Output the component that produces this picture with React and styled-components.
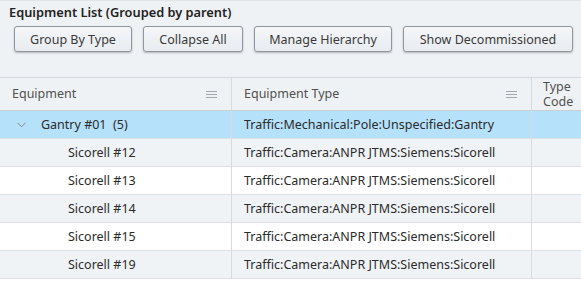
import React from 'react'
import styled, { createGlobalStyle } from 'styled-components'

const Global = createGlobalStyle`
  body {
    margin: 0;
    background: #ffffff;
    font-family: "Noto Sans", "Open Sans", sans-serif;
    color: #2b2b2b;
  }
`

const Page = styled.div`
  width: 581px;
  height: 288px;
  overflow: hidden;
  background: #ffffff;
`

const Toolbar = styled.div`
  height: 78px;
  box-sizing: border-box;
  background: #eff2f5;
  border-top: 1px solid #e1e5ea;
  border-bottom: 1px solid #d3d8de;
  padding: 2px 0 0 9px;
`

const Title = styled.div`
  font-size: 12.8px;
  font-weight: 600;
  line-height: 18px;
  color: #222;
`

const Buttons = styled.div`
  display: flex;
  gap: 11px;
  margin-top: 5px;
  padding-left: 5px;
`

const Button = styled.button`
  height: 26px;
  width: ${p => p.$w}px;
  box-sizing: border-box;
  border: 1px solid #8f969e;
  border-radius: 3px;
  background: linear-gradient(#f4f6f8, #e8ecf0);
  box-shadow: 0 1px 2px rgba(0, 0, 0, 0.25);
  font-family: inherit;
  font-size: 12.5px;
  color: #3a3a3a;
  padding: 0;
`

const Grid = styled.div`
  display: grid;
  grid-template-columns: 232px 300px 1fr;
`

const Row = styled.div`
  display: contents;
  & > div {
    background: ${p => (p.$selected ? '#b5e1fb' : p.$alt ? '#f0f3f6' : '#ffffff')};
    height: 28px;
    border-bottom: 1px solid #dde1e6;
  }
`

const HeadCell = styled.div`
  height: 33px;
  box-sizing: border-box;
  background: #eff2f5;
  border-bottom: 1px solid #c9ced5;
  border-right: ${p => (p.$last ? 'none' : '1px solid #d6dbe1')};
  display: flex;
  align-items: center;
  justify-content: space-between;
  padding: 0 14px 0 ${p => p.$pad || 12}px;
  font-size: 12.5px;
  color: #505050;
  line-height: 15.5px;
`

const Cell = styled.div`
  box-sizing: border-box;
  border-right: ${p => (p.$last ? 'none' : '1px solid #d6dbe1')};
  display: flex;
  align-items: center;
  padding-left: ${p => p.$indent || 12}px;
  font-size: 12.5px;
  color: #2b2b2b;
  white-space: nowrap;
  gap: 15px;
`

const Menu = () => (
  <svg width="11" height="9" viewBox="0 0 11 9">
    <g stroke="#a3a8ae" strokeWidth="1">
      <line x1="0" y1="1.5" x2="11" y2="1.5" />
      <line x1="0" y1="4.5" x2="11" y2="4.5" />
      <line x1="0" y1="7.5" x2="11" y2="7.5" />
    </g>
  </svg>
)

const Chevron = () => (
  <svg width="9" height="6" viewBox="0 0 9 6">
    <path d="M0.5 0.8 L4.5 4.8 L8.5 0.8" fill="none" stroke="#7d8792" strokeWidth="1" />
  </svg>
)

const children = ['Sicorell #12', 'Sicorell #13', 'Sicorell #14', 'Sicorell #15', 'Sicorell #19']

export default function App() {
  return (
    <Page>
      <Global />
      <Toolbar>
        <Title>Equipment List (Grouped by parent)</Title>
        <Buttons>
          <Button $w={118}>Group By Type</Button>
          <Button $w={100}>Collapse All</Button>
          <Button $w={138}>Manage Hierarchy</Button>
          <Button $w={170}>Show Decommissioned</Button>
        </Buttons>
      </Toolbar>
      <Grid>
        <HeadCell>Equipment<Menu /></HeadCell>
        <HeadCell>Equipment Type<Menu /></HeadCell>
        <HeadCell $last $pad={11}>Type<br />Code</HeadCell>
        <Row $selected>
          <Cell $indent={17}><Chevron />Gantry #01&nbsp;&nbsp;(5)</Cell>
          <Cell>Traffic:Mechanical:Pole:Unspecified:Gantry</Cell>
          <Cell $last />
        </Row>
        {children.map((name, i) => (
          <Row key={name} $alt={i % 2 === 0}>
            <Cell $indent={68}>{name}</Cell>
            <Cell>Traffic:Camera:ANPR JTMS:Siemens:Sicorell</Cell>
            <Cell $last />
          </Row>
        ))}
      </Grid>
    </Page>
  )
}
